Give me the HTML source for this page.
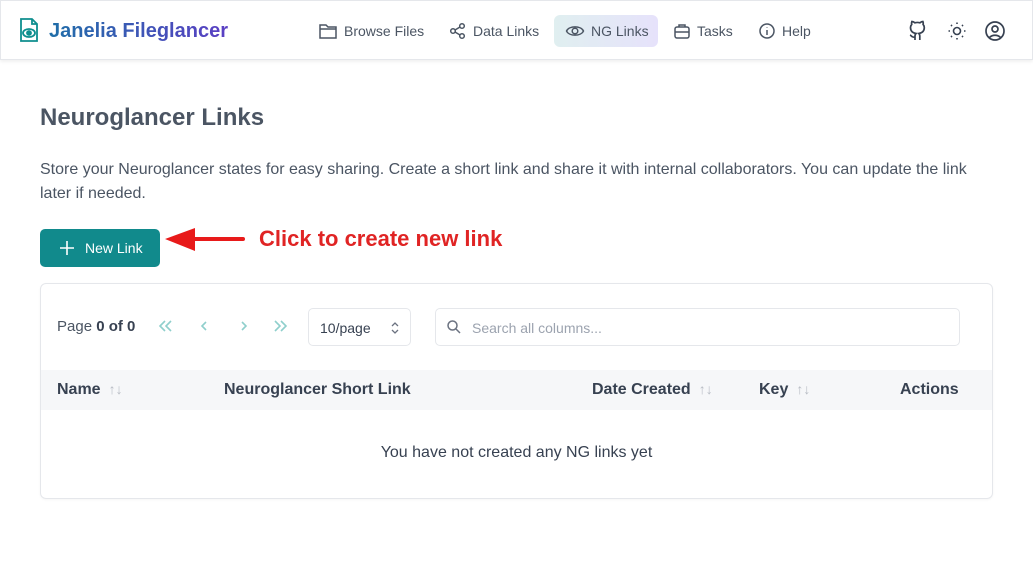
<!DOCTYPE html>
<html><head><style>
*{box-sizing:border-box;margin:0;padding:0}
body{width:1033px;height:567px;background:#fff;font-family:"Liberation Sans",sans-serif;color:#374151;position:relative;overflow:hidden}
.hdr{position:absolute;left:0;top:0;width:1033px;height:60px;background:#fff;border:1px solid #e5e7eb;box-shadow:0 2px 3px rgba(0,0,0,.06)}
.abs{position:absolute}
.nav{position:absolute;top:15px;height:32px;display:flex;align-items:center;font-size:14px;color:#4b5563;gap:6px}
svg{display:block}
.th{position:absolute;top:381px;font-size:16px;font-weight:bold;color:#374151}
.sort{color:#b8bcc4;font-weight:normal;font-size:14px;margin-left:8px}
</style></head><body>
<div class="hdr"></div>
<svg class="abs" style="left:19px;top:17px" width="20" height="26" viewBox="0 0 20 26" fill="none" stroke="#0e8f8f" stroke-width="1.8"><path d="M2 2h11l5 5v17H2z"/><path d="M13 2v5h5"/><ellipse cx="10" cy="16" rx="6" ry="4"/><circle cx="10" cy="16" r="2" fill="#0e8f8f"/></svg>
<div class="abs" style="left:49px;top:20px;font-size:20px;font-weight:bold;background:linear-gradient(90deg,#1f6ea8,#5b3fc4);-webkit-background-clip:text;color:transparent">Janelia Fileglancer</div>
<div class="nav" style="left:318px"><svg width="20" height="18" viewBox="0 0 20 18" fill="none" stroke="#4b5563" stroke-width="1.5"><path d="M2 3h6l2 2h8v11H2z"/><path d="M2 7h16"/></svg>Browse Files</div>
<div class="nav" style="left:449px"><svg width="18" height="18" viewBox="0 0 18 18" fill="none" stroke="#4b5563" stroke-width="1.5"><circle cx="4" cy="9" r="2.3"/><circle cx="13" cy="4" r="2.3"/><circle cx="13" cy="14" r="2.3"/><path d="M6 8l5-3M6 10l5 3"/></svg>Data Links</div>
<div class="abs" style="left:554px;top:15px;width:104px;height:32px;border-radius:6px;background:linear-gradient(90deg,#e0eff0,#e6e2fb)"></div>
<div class="nav" style="left:565px"><svg width="20" height="18" viewBox="0 0 20 18" fill="none" stroke="#4b5563" stroke-width="1.5"><path d="M1.5 9C4 3.5 16 3.5 18.5 9 16 14.5 4 14.5 1.5 9z"/><circle cx="10" cy="9" r="2.8"/></svg>NG Links</div>
<div class="nav" style="left:673px"><svg width="18" height="18" viewBox="0 0 18 18" fill="none" stroke="#4b5563" stroke-width="1.5"><rect x="2" y="5" width="14" height="11" rx="2"/><path d="M6 5V3h6v2M2 10h14"/></svg>Tasks</div>
<div class="nav" style="left:758px"><svg width="18" height="18" viewBox="0 0 18 18" fill="none" stroke="#4b5563" stroke-width="1.5"><circle cx="9" cy="9" r="7"/><path d="M9 8v5M9 5.5v.5"/></svg>Help</div>
<svg class="abs" style="left:908px;top:20px" width="20" height="22" viewBox="0 0 20 22" fill="none" stroke="#374151" stroke-width="1.7"><path d="M7 20v-4c0-1 .5-2 1-2.5-3-.5-5.5-2-5.5-6 0-1.2.4-2.2 1.2-3-.2-.8-.2-2 .2-3 1 0 2 .5 3 1.3a9 9 0 015 0c1-.8 2-1.3 3-1.3.4 1 .4 2.2.2 3 .8.8 1.2 1.8 1.2 3 0 4-2.5 5.5-5.5 6 .5.5 1 1.5 1 2.5v4M7 17c-3 1-3.5-1.5-5-2"/></svg>
<svg class="abs" style="left:947px;top:21px" width="20" height="20" viewBox="0 0 20 20" fill="none" stroke="#374151" stroke-width="1.6"><circle cx="10" cy="10" r="3.5"/><path d="M10 1.5v1.5M10 17v1.5M1.5 10H3M17 10h1.5M4 4l1 1M15 15l1 1M4 16l1-1M15 5l1-1"/></svg>
<svg class="abs" style="left:984px;top:20px" width="22" height="22" viewBox="0 0 22 22" fill="none" stroke="#374151" stroke-width="1.7"><circle cx="11" cy="11" r="9"/><circle cx="11" cy="9" r="3"/><path d="M5.5 17.5c3-3 8-3 11 0"/></svg>

<div class="abs" style="left:40px;top:104px;font-size:24px;font-weight:bold;color:#4b5563">Neuroglancer Links</div>
<div class="abs" style="left:40px;top:158px;width:950px;font-size:16px;line-height:24px;color:#4b5563">Store your Neuroglancer states for easy sharing. Create a short link and share it with internal collaborators. You can update the link later if needed.</div>
<div class="abs" style="left:40px;top:229px;width:120px;height:38px;background:#118a8c;border-radius:5px;color:#fff;font-size:14px;display:flex;align-items:center;padding-left:19px"><svg width="16" height="16" viewBox="0 0 16 16" stroke="#fff" stroke-width="1.6"><path d="M8 1v14M1 8h14"/></svg><span style="margin-left:10px">New Link</span></div>
<svg class="abs" style="left:163px;top:225px" width="84" height="30" viewBox="0 0 84 30"><path d="M30 14h50" stroke="#e81a1a" stroke-width="4" stroke-linecap="round"/><path d="M2 14L32 3v23z" fill="#e81a1a"/></svg>
<div class="abs" style="left:259px;top:226px;font-size:22px;font-weight:bold;color:#e02424">Click to create new link</div>

<div class="abs" style="left:40px;top:283px;width:953px;height:216px;border:1px solid #e5e7eb;border-radius:6px;box-shadow:0 1px 2px rgba(0,0,0,.04)"></div>
<div class="abs" style="left:57px;top:318px;font-size:15px;color:#4b5563">Page <b style="color:#374151">0 of 0</b></div>
<svg class="abs" style="left:158px;top:319px" width="140" height="14" viewBox="0 0 140 14" fill="none" stroke="#8fcfcc" stroke-width="1.6"><path d="M7 2L2 7l5 5M13 2L8 7l5 5M48 3l-4 4 4 4M84 3l4 4-4 4M117 2l5 5-5 5M123 2l5 5-5 5"/></svg>
<div class="abs" style="left:308px;top:308px;width:103px;height:38px;border:1px solid #e5e7eb;border-radius:5px;font-size:14px;color:#374151;padding:11px 0 0 11px">10/page
<svg style="position:absolute;right:11px;top:12px" width="8" height="14" viewBox="0 0 8 14" fill="none" stroke="#6b7280" stroke-width="1.3"><path d="M1 5l3-3 3 3M1 9l3 3 3-3"/></svg></div>
<div class="abs" style="left:435px;top:308px;width:525px;height:38px;border:1px solid #e5e7eb;border-radius:5px;font-size:14px;color:#9ca3af;padding:11px 0 0 36px">Search all columns...
<svg style="position:absolute;left:10px;top:10px" width="16" height="16" viewBox="0 0 16 16" fill="none" stroke="#6b7280" stroke-width="1.5"><circle cx="6.5" cy="6.5" r="4.5"/><path d="M10 10l4 4"/></svg></div>
<div class="abs" style="left:41px;top:370px;width:951px;height:40px;background:#f6f7f9"></div>
<div class="th" style="left:57px">Name<span class="sort">↑↓</span></div>
<div class="th" style="left:224px">Neuroglancer Short Link</div>
<div class="th" style="left:592px">Date Created<span class="sort">↑↓</span></div>
<div class="th" style="left:759px">Key<span class="sort">↑↓</span></div>
<div class="th" style="left:900px">Actions</div>
<div class="abs" style="left:41px;top:444px;width:951px;text-align:center;font-size:16px;color:#374151">You have not created any NG links yet</div>
</body></html>
